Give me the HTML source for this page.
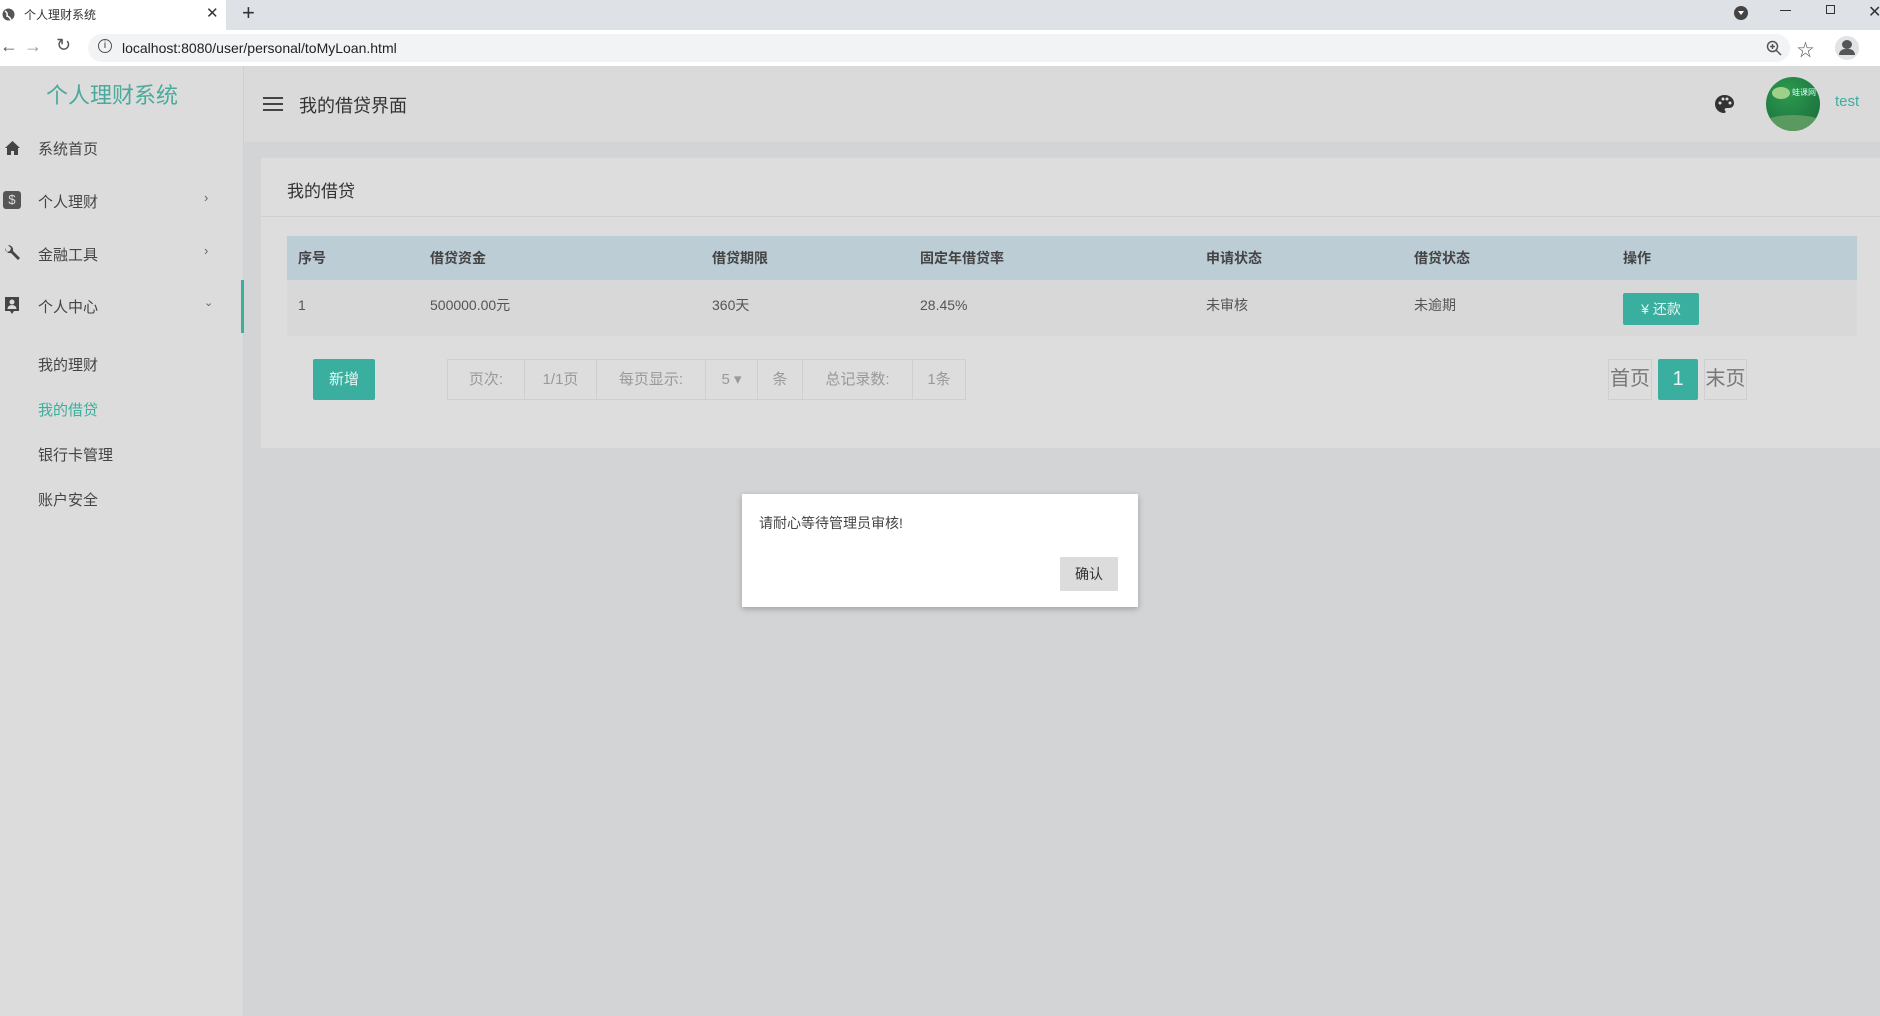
<!DOCTYPE html>
<html><head><meta charset="utf-8"><style>
*{margin:0;padding:0;box-sizing:border-box}
body{width:1880px;height:1016px;overflow:hidden;font-family:"Liberation Sans","Noto Sans CJK SC",sans-serif;background:#d3d4d6;position:relative;color:#333}
.a{position:absolute}
.tabbar{left:0;top:0;width:1880px;height:30px;background:#dee1e6}
.tab{left:0;top:0;width:226px;height:30px;background:#fff;font-size:12px;color:#333}
.addr{left:0;top:30px;width:1880px;height:36px;background:#fff}
.url{left:88px;top:34px;width:1702px;height:28px;border-radius:14px;background:#f1f3f4;font-size:14px;color:#222;line-height:28px;padding-left:34px}
.side{left:0;top:66px;width:244px;height:950px;background:#dcdcdc;border-right:1px solid #d0d0d0}
.head{left:244px;top:66px;width:1636px;height:76px;background:#dadada}
.mi{left:38px;font-size:15px;color:#444}
.th{top:236px;height:44px;line-height:44px;font-size:14px;font-weight:bold;color:#444}
.td{top:280px;height:50px;line-height:50px;font-size:14px;color:#555}
.pg{top:359px;height:41px;line-height:39px;border:1px solid #cfcfcf;font-size:15px;color:#999;text-align:center}
</style></head><body>
<div class="a" style="left:261px;top:158px;width:1619px;height:290px;background:#dddddd"></div>
<div class="a tabbar"></div>
<div class="a tab"><svg class="a" style="left:2px;top:8px" width="13" height="13" viewBox="0 0 13 13"><circle cx="6.5" cy="6.5" r="6" fill="#555"/><path d="M3 3 Q6 5 5 8 Q8 9 9 12" stroke="#fff" stroke-width="1.5" fill="none"/></svg><span class="a" style="left:24px;top:6px">个人理财系统</span><span class="a" style="left:206px;top:4px;font-size:15px">✕</span></div>
<span class="a" style="left:242px;top:0px;font-size:22px;color:#333">+</span>
<svg class="a" style="left:1734px;top:6px" width="14" height="14"><circle cx="7" cy="7" r="7" fill="#444"/><path d="M4 5h6l-3 4z" fill="#fff"/></svg>
<div class="a" style="left:1780px;top:10px;width:11px;height:1px;background:#333"></div>
<div class="a" style="left:1826px;top:5px;width:9px;height:9px;border:1px solid #333"></div>
<span class="a" style="left:1868px;top:2px;font-size:16px">✕</span>
<div class="a addr"></div>
<span class="a" style="left:0;top:36px;font-size:18px;color:#555">←</span>
<span class="a" style="left:24px;top:36px;font-size:18px;color:#999">→</span>
<span class="a" style="left:56px;top:35px;font-size:18px;color:#555">↻</span>
<div class="a url">localhost:8080/user/personal/toMyLoan.html</div>
<span class="a" style="left:98px;top:39px;width:14px;height:14px;border:1.5px solid #555;border-radius:50%;font-size:10px;text-align:center;line-height:11px">i</span>
<svg class="a" style="left:1766px;top:40px" width="16" height="16"><circle cx="6.5" cy="6.5" r="5" fill="none" stroke="#555" stroke-width="1.5"/><path d="M10 10l5 5M4 6.5h5M6.5 4v5" stroke="#555" stroke-width="1.5"/></svg>
<span class="a" style="left:1797px;top:36px;font-size:17px;color:#555">☆</span>
<div class="a" style="left:1835px;top:36px;width:24px;height:24px;border-radius:50%;background:#e0e3e7"></div>
<div class="a" style="left:1842px;top:40px;width:10px;height:9px;border-radius:50%;background:#555"></div>
<div class="a" style="left:1839px;top:49px;width:16px;height:6px;border-radius:6px 6px 0 0;background:#555"></div>
<span class="a" style="left:1874px;top:36px;font-size:16px;color:#555">⋮</span>

<div class="a side"></div>
<div class="a" style="left:0;top:66px;width:224px;height:76px;text-align:center;line-height:60px;font-size:22px;color:#4aab9c">个人理财系统</div>
<svg class="a" style="left:5px;top:141px" width="15" height="14"><path d="M7.5 0L0 7h2v7h4v-4h3v4h4V7h2z" fill="#444"/></svg>
<div class="a mi" style="top:138px">系统首页</div>
<div class="a" style="left:3px;top:191px;width:18px;height:18px;background:#555;border-radius:3px;color:#ddd;font-size:13px;text-align:center;line-height:18px">$</div>
<div class="a mi" style="top:191px">个人理财</div><span class="a" style="left:204px;top:190px;font-size:13px;color:#666">›</span>
<svg class="a" style="left:3px;top:244px" width="18" height="18"><path d="M2 4a5 5 0 0 0 6 5l7 7 2-2-7-7a5 5 0 0 0-5-6l3 3-1 3-3 1z" fill="#444"/></svg>
<div class="a mi" style="top:244px">金融工具</div><span class="a" style="left:204px;top:243px;font-size:13px;color:#666">›</span>
<svg class="a" style="left:4px;top:297px" width="16" height="18"><path d="M1 0h14v14h-5l-2 3-2-3H1z" fill="#444"/><circle cx="8" cy="5" r="2.5" fill="#ddd"/><path d="M3.5 12a4.5 4 0 0 1 9 0z" fill="#ddd"/></svg>
<div class="a mi" style="top:296px">个人中心</div><span class="a" style="left:204px;top:296px;font-size:11px;color:#666">⌄</span>
<div class="a" style="left:241px;top:280px;width:3px;height:53px;background:#3aaf9f"></div>
<div class="a mi" style="top:354px">我的理财</div>
<div class="a mi" style="top:399px;color:#3aaf9f">我的借贷</div>
<div class="a mi" style="top:444px">银行卡管理</div>
<div class="a mi" style="top:489px">账户安全</div>

<div class="a head"></div>
<div class="a" style="left:263px;top:97px;width:20px;height:2px;background:#444;box-shadow:0 6px 0 #444,0 12px 0 #444"></div>
<div class="a" style="left:299px;top:92px;font-size:18px;color:#333">我的借贷界面</div>
<svg class="a" style="left:1715px;top:95px" width="19" height="18"><path d="M9.5 0C4 0 0 4 0 9s4 9 9 9c2 0 2-1.5 1-2.5s0-2.5 1.5-2.5H14c3 0 5-2 5-5C19 3.5 15 0 9.5 0z" fill="#333"/><circle cx="5" cy="8" r="1.5" fill="#ddd"/><circle cx="8" cy="4" r="1.5" fill="#ddd"/><circle cx="12" cy="4" r="1.5" fill="#ddd"/><circle cx="15" cy="8" r="1.5" fill="#ddd"/></svg>
<div class="a" style="left:1766px;top:77px;width:54px;height:54px;border-radius:50%;background:radial-gradient(circle at 40% 30%,#2c9a4e,#18683a);overflow:hidden"><div class="a" style="left:6px;top:10px;width:18px;height:12px;border-radius:50%;background:#9fd08a"></div><div class="a" style="left:26px;top:10px;font-size:8px;color:#cfe">蛙课网</div><div class="a" style="left:-5px;top:38px;width:64px;height:20px;border-radius:50%;background:#5a9a60"></div></div>
<div class="a" style="left:1835px;top:93px;font-size:15px;color:#3aaf9f">test</div>

<div class="a" style="left:287px;top:177px;font-size:17px;color:#333">我的借贷</div>
<div class="a" style="left:261px;top:216px;width:1619px;height:1px;background:#d0d0d0"></div>
<div class="a" style="left:287px;top:236px;width:1570px;height:44px;background:#bccdd6"></div>
<div class="a" style="left:287px;top:280px;width:1570px;height:56px;background:#d8d8d8"></div>
<div class="a th" style="left:298px">序号</div><div class="a th" style="left:430px">借贷资金</div><div class="a th" style="left:712px">借贷期限</div><div class="a th" style="left:920px">固定年借贷率</div><div class="a th" style="left:1206px">申请状态</div><div class="a th" style="left:1414px">借贷状态</div><div class="a th" style="left:1623px">操作</div>
<div class="a td" style="left:298px">1</div><div class="a td" style="left:430px">500000.00元</div><div class="a td" style="left:712px">360天</div><div class="a td" style="left:920px">28.45%</div><div class="a td" style="left:1206px">未审核</div><div class="a td" style="left:1414px">未逾期</div>
<div class="a" style="left:1623px;top:293px;width:76px;height:32px;background:#3aaf9f;border-radius:2px;color:#e8f5f3;font-size:14px;text-align:center;line-height:32px">¥ 还款</div>
<div class="a" style="left:313px;top:359px;width:62px;height:41px;background:#3aaf9f;border-radius:2px;color:#e8f5f3;font-size:15px;text-align:center;line-height:41px">新增</div>
<div class="a pg" style="left:447px;width:78px">页次:</div>
<div class="a pg" style="left:524px;width:73px">1/1页</div>
<div class="a pg" style="left:596px;width:110px">每页显示:</div>
<div class="a pg" style="left:705px;width:53px">5 ▾</div>
<div class="a pg" style="left:757px;width:46px">条</div>
<div class="a pg" style="left:802px;width:111px">总记录数:</div>
<div class="a pg" style="left:912px;width:54px">1条</div>
<div class="a pg" style="left:1608px;width:44px;font-size:20px;color:#777">首页</div>
<div class="a pg" style="left:1658px;width:40px;font-size:20px;color:#e8f5f3;background:#3aaf9f;border-color:#3aaf9f;border-radius:2px">1</div>
<div class="a pg" style="left:1704px;width:43px;font-size:20px;color:#777">末页</div>

<div class="a" style="left:742px;top:494px;width:396px;height:113px;background:#fff;box-shadow:0 2px 6px rgba(0,0,0,.25)"></div>
<div class="a" style="left:759px;top:513px;font-size:14px;color:#444">请耐心等待管理员审核!</div>
<div class="a" style="left:1060px;top:557px;width:58px;height:34px;background:#dcdcdc;font-size:14px;text-align:center;line-height:34px;color:#333">确认</div>
</body></html>
